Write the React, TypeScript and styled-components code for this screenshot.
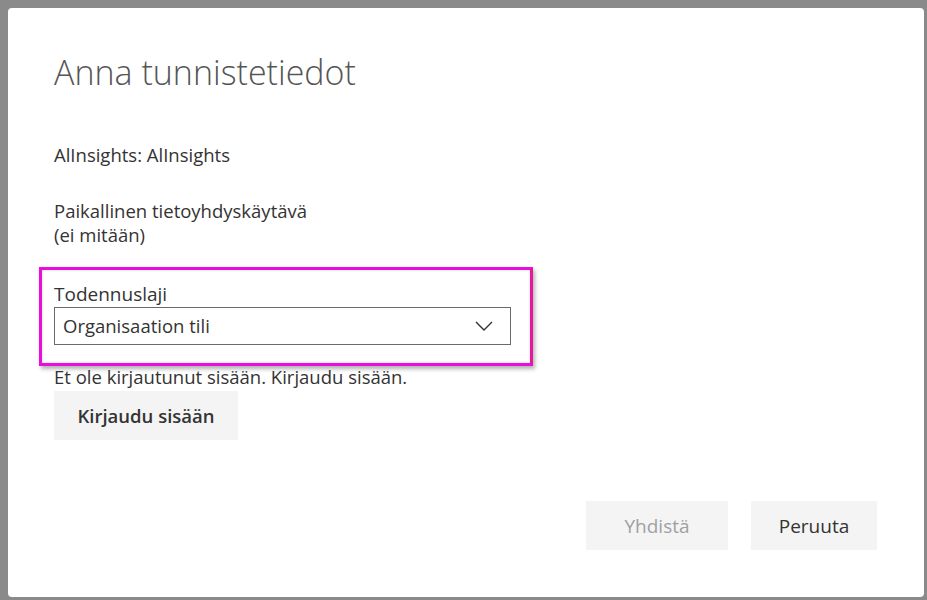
import React from "react";
import styled, { createGlobalStyle } from "styled-components";

const Global = createGlobalStyle`
  html, body { margin: 0; padding: 0; }
  body {
    background: #8a8a8a;
    font-family: "Open Sans", "Segoe UI", sans-serif;
    width: 927px;
    height: 600px;
    overflow: hidden;
  }
`;

const Frame = styled.div`
  box-sizing: border-box;
  width: 927px;
  height: 600px;
  padding: 8px 3px 3px 8px;
  display: flex;
`;

const Dialog = styled.div`
  flex: 1;
  background: #fff;
  border-radius: 4px;
  box-sizing: border-box;
  padding: 42px 47px 0 46px;
  display: flex;
  flex-direction: column;
  color: #333;
`;

const Title = styled.h1`
  margin: 0;
  font-weight: 300;
  font-size: 34px;
  line-height: 44px;
  color: #555;
`;

const Text = styled.div<{ $top?: number; $lh?: number }>`
  font-size: 18.5px;
  line-height: ${(p) => p.$lh ?? 24}px;
  margin-top: ${(p) => p.$top ?? 0}px;
  color: #333;
`;

const Highlight = styled.div`
  margin: 20px 0 0 -15px;
  width: 494px;
  height: 99px;
  box-sizing: border-box;
  border: 3px solid #e60fdc;
  border-right-color: #e5179f;
  box-shadow: 2px 3px 4px rgba(0, 0, 0, 0.3), inset 0 0 3px rgba(0, 0, 0, 0.18);
  padding: 12px 19px 0 12px;
  display: flex;
  flex-direction: column;
`;

const Label = styled.div`
  font-size: 19px;
  line-height: 24px;
  color: #333;
`;

const Select = styled.div`
  margin-top: 1px;
  height: 38px;
  box-sizing: border-box;
  border: 1.5px solid #6a6a6a;
  display: flex;
  align-items: center;
  justify-content: space-between;
  padding: 0 17px 0 8px;
  font-size: 18.5px;
  line-height: 24px;
  color: #333;
`;

const Button = styled.button<{ $disabled?: boolean; $bold?: boolean; $width: number }>`
  border: none;
  background: #f4f4f4;
  height: 49px;
  width: ${(p) => p.$width}px;
  padding: 0;
  font-family: inherit;
  font-size: ${(p) => (p.$bold ? 18.5 : 19)}px;
  font-weight: ${(p) => (p.$bold ? 600 : 400)};
  color: ${(p) => (p.$disabled ? "#a0a0a0" : "#333")};
  cursor: ${(p) => (p.$disabled ? "default" : "pointer")};
`;

const LoginRow = styled.div`
  margin-top: 3px;
  display: flex;
`;

const Footer = styled.div`
  margin-top: 61px;
  display: flex;
  justify-content: flex-end;
  gap: 23px;
`;

const Chevron = () => (
  <svg width="18" height="10" viewBox="0 0 18 10" fill="none">
    <path d="M1 1l8 8 8-8" stroke="#333" strokeWidth="1.4" />
  </svg>
);

export default function App() {
  return (
    <>
      <Global />
      <Frame>
        <Dialog>
          <Title>Anna tunnistetiedot</Title>
          <Text $top={49}>AlInsights: AlInsights</Text>
          <Text $top={32}>Paikallinen tietoyhdyskäytävä</Text>
          <Text>(ei mitään)</Text>
          <Highlight>
            <Label>Todennuslaji</Label>
            <Select>
              <span>Organisaation tili</span>
              <Chevron />
            </Select>
          </Highlight>
          <Text $lh={22}>Et ole kirjautunut sisään. Kirjaudu sisään.</Text>
          <LoginRow>
            <Button $bold $width={184}>Kirjaudu sisään</Button>
          </LoginRow>
          <Footer>
            <Button $disabled $width={142}>Yhdistä</Button>
            <Button $width={126}>Peruuta</Button>
          </Footer>
        </Dialog>
      </Frame>
    </>
  );
}
